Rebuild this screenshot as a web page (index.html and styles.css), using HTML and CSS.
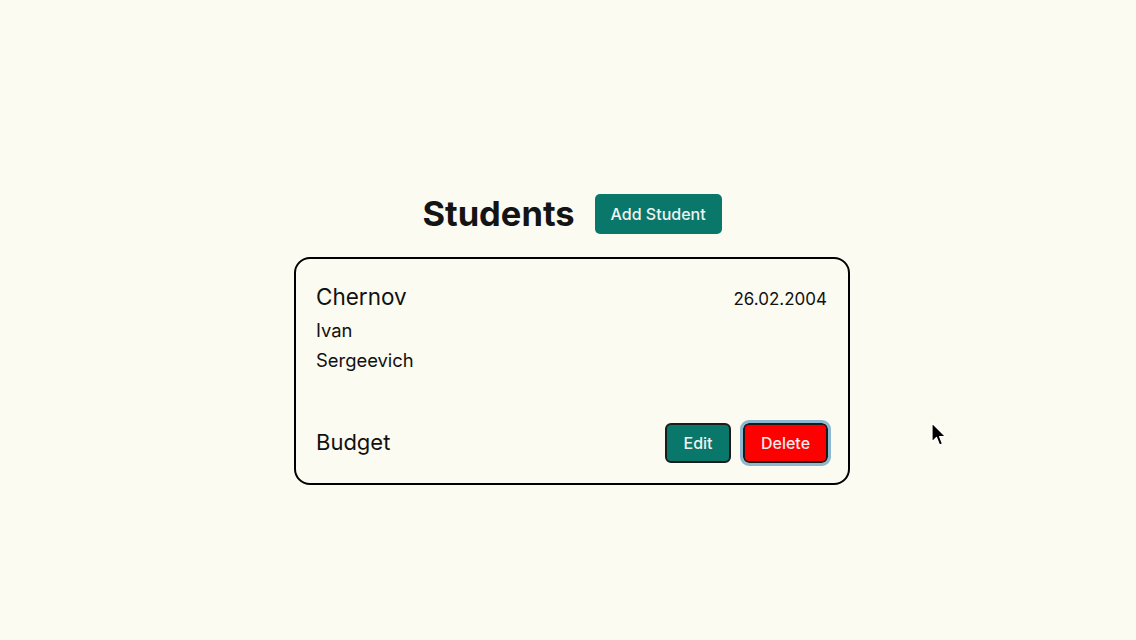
FILE: index.html
```html
<!DOCTYPE html>
<html lang="en">
<head>
<meta charset="utf-8">
<title>Students</title>
<link rel="stylesheet" href="styles.css">
</head>
<body>
<main class="page">
  <header class="head">
    <h1 class="title">Students</h1>
    <button class="btn btn-add">Add Student</button>
  </header>
  <article class="card">
    <div class="row-top">
      <span class="surname">Chernov</span>
      <span class="date">26.02.2004</span>
    </div>
    <div class="name">Ivan</div>
    <div class="name">Sergeevich</div>
    <div class="row-bottom">
      <span class="budget">Budget</span>
      <div class="actions">
        <button class="btn btn-edit">Edit</button>
        <button class="btn btn-delete">Delete</button>
      </div>
    </div>
  </article>
</main>
<svg class="cursor" width="20" height="26" viewBox="0 0 20 26">
  <path d="M2 1 L2 20 L6.5 15.5 L9.5 23 L12.5 21.8 L9.6 14.6 L15.5 14.6 Z" fill="#000" stroke="#fff" stroke-width="1.2" stroke-linejoin="round"/>
</svg>
</body>
</html>
```
FILE: styles.css
```css
html, body {
  margin: 0;
  padding: 0;
  background: #fbfbf2;
  height: 100%;
}
body {
  font-family: Inter, "Liberation Sans", sans-serif;
  color: #111;
}
.page {
  display: flex;
  flex-direction: column;
  align-items: center;
  padding-top: 194px;
  padding-left: 8px;
}
.head {
  display: flex;
  align-items: center;
  gap: 20px;
  margin-bottom: 23px;
  height: 40px;
}
.title {
  margin: 0;
  font-family: Inter, sans-serif;
  font-weight: 700;
  font-size: 34.5px;
  line-height: 40px;
  color: #141414;
  letter-spacing: 0;
}
.btn {
  font-family: Inter, sans-serif;
  font-weight: 500;
  font-size: 16px;
  color: #eef3f1;
  border: none;
  border-radius: 5px;
  height: 40px;
  cursor: pointer;
}
.btn-add {
  background: #0a776b;
  width: 127px;
  padding: 0;
}
.card {
  box-sizing: border-box;
  width: 556px;
  height: 228px;
  border: 2px solid #000;
  border-radius: 16px;
  padding: 20px 20px 20px 20px;
  display: flex;
  flex-direction: column;
}
.row-top {
  display: flex;
  justify-content: space-between;
  align-items: baseline;
  height: 36px;
  line-height: 36px;
}
.surname {
  font-size: 22.5px;
}
.date {
  font-size: 17px;
  margin-right: 1px;
}
.name {
  font-size: 18.4px;
  line-height: 30px;
}
.row-bottom {
  margin-top: auto;
  display: flex;
  justify-content: space-between;
  align-items: center;
}
.budget {
  font-size: 22px;
  padding-bottom: 2px;
}
.actions {
  display: flex;
  gap: 12px;
  align-items: center;
}
.btn-edit {
  box-sizing: border-box;
  width: 66px;
  background: #0a776b;
  border: 2px solid #1b1b1b;
  border-radius: 6px;
}
.btn-delete {
  box-sizing: border-box;
  width: 85px;
  background: #ff0000;
  border: 2px solid #1b1b1b;
  border-radius: 6px;
  outline: 3px solid #8db8cf;
  outline-offset: 0;
  color: #f6eaea;
}
.cursor {
  position: absolute;
  left: 930px;
  top: 422px;
}
```
